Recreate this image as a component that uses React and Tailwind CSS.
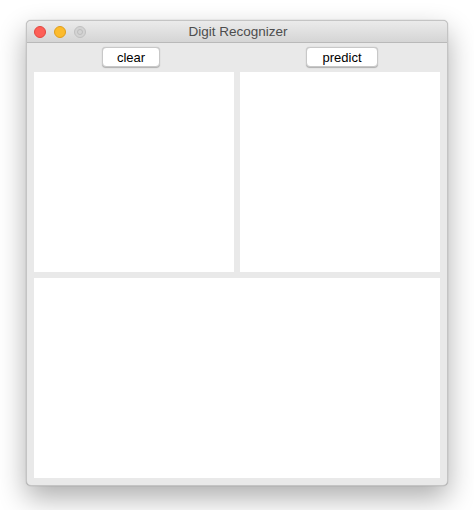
export default function App() {
  return (
    <div className="w-[474px] h-[510px] bg-white pl-[26px] pt-[20px]" style={{ fontFamily: '"Helvetica Neue", "Liberation Sans", Arial, sans-serif' }}>
      <div className="w-[422px] h-[466px] rounded-[5px] bg-[#e9e9e9] border border-[#c4c4c4] shadow-[0_12px_28px_rgba(0,0,0,0.32),0_0_1px_rgba(0,0,0,0.4)] overflow-hidden flex flex-col">
        <div className="h-[22px] shrink-0 relative flex items-center justify-center bg-gradient-to-b from-[#ebebeb] to-[#d5d5d5] border-b border-[#b9b9b9]">
          <div className="absolute left-[7px] top-[5px] flex gap-[8px]">
            <div className="w-[12px] h-[12px] rounded-full bg-[#fd5f57] border border-[#e2463f]" />
            <div className="w-[12px] h-[12px] rounded-full bg-[#fcbb2d] border border-[#e09e1a]" />
            <div className="w-[12px] h-[12px] rounded-full bg-[#d3d3d3] border border-[#c0c0c0] flex items-center justify-center">
              <div className="w-[6px] h-[6px] rounded-full border border-[#bdbdbd]" />
            </div>
          </div>
          <span className="text-[13.5px] text-[#4d4d4d] leading-none ml-[2px]">Digit Recognizer</span>
        </div>
        <div className="flex-1 px-[7px] pt-[4px]">
          <div className="grid grid-cols-2 gap-x-[6px]">
            <div className="flex justify-center">
              <button className="w-[58px] h-[20px] bg-white rounded-[4px] border border-[#c8c8c8] shadow-[0_0.5px_1px_rgba(0,0,0,0.25)] text-[13px] text-black leading-none mr-[6px]">clear</button>
            </div>
            <div className="flex justify-center">
              <button className="w-[72px] h-[20px] bg-white rounded-[4px] border border-[#c8c8c8] shadow-[0_0.5px_1px_rgba(0,0,0,0.25)] text-[13px] text-black leading-none ml-[4px]">predict</button>
            </div>
          </div>
          <div className="grid grid-cols-2 gap-[6px] mt-[5px]">
            <div className="h-[200px] bg-white" />
            <div className="h-[200px] bg-white" />
            <div className="col-span-2 h-[200px] bg-white" />
          </div>
        </div>
      </div>
    </div>
  );
}
